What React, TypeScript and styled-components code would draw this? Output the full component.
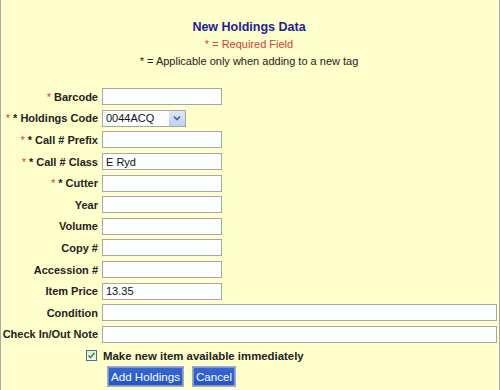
import React from 'react'
import styled, { createGlobalStyle } from 'styled-components'

const GlobalStyle = createGlobalStyle`
  html, body {
    margin: 0;
    padding: 0;
  }
  body {
    font-family: 'Liberation Sans', Arial, sans-serif;
    color: #222;
  }
`

const Page = styled.div`
  box-sizing: border-box;
  width: 500px;
  height: 390px;
  background: #ffffcc;
  border-left: 1px solid #a9a9a9;
  border-right: 1px solid #a9a9a9;
  padding: 19px 2px 0 0;
  overflow: hidden;
`

const Header = styled.div`
  text-align: center;
  margin-bottom: 16px;
`

const Title = styled.div`
  color: #1d1d9c;
  font-size: 12.5px;
  font-weight: bold;
  line-height: 17px;
`

const Note = styled.div<{ $red?: boolean }>`
  color: ${(p) => (p.$red ? '#d63c3c' : '#222')};
  font-size: 11px;
  line-height: 17px;
`

const FormGrid = styled.div`
  display: grid;
  grid-template-columns: 97px 1fr;
  column-gap: 4px;
  grid-auto-rows: 21.6px;
  align-items: center;
`

const Label = styled.label`
  text-align: right;
  font-size: 11px;
  font-weight: bold;
  color: #222;
  white-space: nowrap;
`

const Star = styled.span`
  color: #d63c3c;
  font-weight: normal;
  margin-right: 3px;
`

const TextInput = styled.input<{ $wide?: boolean }>`
  box-sizing: border-box;
  width: ${(p) => (p.$wide ? '100%' : '120px')};
  height: 17px;
  padding: 0 3px;
  border: 1px solid #a7a7a7;
  background: #fbfdff;
  font-family: 'Liberation Sans', Arial, sans-serif;
  font-size: 11px;
  color: #111;
  outline: none;
`

const SelectWrap = styled.div`
  position: relative;
  box-sizing: border-box;
  width: 84px;
  height: 17px;
  border: 1px solid #a7a7a7;
  background: #fbfdff;
  font-size: 11px;
  line-height: 15px;
  padding-left: 3px;
  color: #111;
`

const SelectArrow = styled.span`
  position: absolute;
  top: 0;
  right: 0;
  width: 16px;
  height: 15px;
  background: linear-gradient(#dce8fc, #bcd0f6);
  display: flex;
  align-items: center;
  justify-content: center;
`

const CheckCell = styled.div`
  display: flex;
  justify-content: flex-end;
  padding-right: 1px;
`

const CheckBox = styled.span`
  box-sizing: border-box;
  width: 11px;
  height: 11px;
  border: 1px solid #4f6f8f;
  background: linear-gradient(#e8e8e2, #fbfbf8);
  display: flex;
  align-items: center;
  justify-content: center;
`

const CheckText = styled.span`
  font-size: 11.4px;
  font-weight: bold;
  color: #222;
  padding-left: 1px;
`

const ButtonRow = styled.div`
  display: flex;
  gap: 8px;
  padding-left: 5px;
  margin-top: -2px;
`

const Button = styled.button`
  box-sizing: border-box;
  height: 21px;
  padding: 0 3px;
  background: linear-gradient(#3566de, #2254cc);
  color: #fff;
  font-family: 'Liberation Sans', Arial, sans-serif;
  font-size: 11.6px;
  border: 1px solid #a4acba;
  box-shadow: inset 0 0 0 1px #7d96d4;
  cursor: pointer;
`

type Field = { label: string; stars: number; value?: string; wide?: boolean; select?: boolean }

const fields: Field[] = [
  { label: 'Barcode', stars: 1 },
  { label: 'Holdings Code', stars: 2, value: '0044ACQ', select: true },
  { label: 'Call # Prefix', stars: 2 },
  { label: 'Call # Class', stars: 2, value: 'E Ryd' },
  { label: 'Cutter', stars: 2 },
  { label: 'Year', stars: 0 },
  { label: 'Volume', stars: 0 },
  { label: 'Copy #', stars: 0 },
  { label: 'Accession #', stars: 0 },
  { label: 'Item Price', stars: 0, value: '13.35' },
  { label: 'Condition', stars: 0, wide: true },
  { label: 'Check In/Out Note', stars: 0, wide: true }
]

const App: React.FC = () => {
  return (
    <Page>
      <GlobalStyle />
      <Header>
        <Title>New Holdings Data</Title>
        <Note $red>* = Required Field</Note>
        <Note>* = Applicable only when adding to a new tag</Note>
      </Header>
      <FormGrid>
        {fields.map((f) => (
          <React.Fragment key={f.label}>
            <Label>
              {f.stars >= 1 && <Star>*</Star>}
              {f.stars >= 2 && <span style={{ marginRight: 3 }}>*</span>}
              {f.label}
            </Label>
            {f.select ? (
              <SelectWrap>
                {f.value}
                <SelectArrow>
                  <svg width='8' height='6' viewBox='0 0 8 6'>
                    <path d='M1 1.5 L4 4.5 L7 1.5' fill='none' stroke='#4d6185' strokeWidth='1.6' />
                  </svg>
                </SelectArrow>
              </SelectWrap>
            ) : (
              <TextInput $wide={f.wide} defaultValue={f.value} />
            )}
          </React.Fragment>
        ))}
        <CheckCell>
          <CheckBox>
            <svg width='9' height='9' viewBox='0 0 9 9'>
              <path d='M1.5 4.5 L3.5 6.5 L7.5 2' fill='none' stroke='#21a121' strokeWidth='1.6' />
            </svg>
          </CheckBox>
        </CheckCell>
        <CheckText>Make new item available immediately</CheckText>
        <div />
        <ButtonRow>
          <Button>Add Holdings</Button>
          <Button>Cancel</Button>
        </ButtonRow>
      </FormGrid>
    </Page>
  )
}

export default App
